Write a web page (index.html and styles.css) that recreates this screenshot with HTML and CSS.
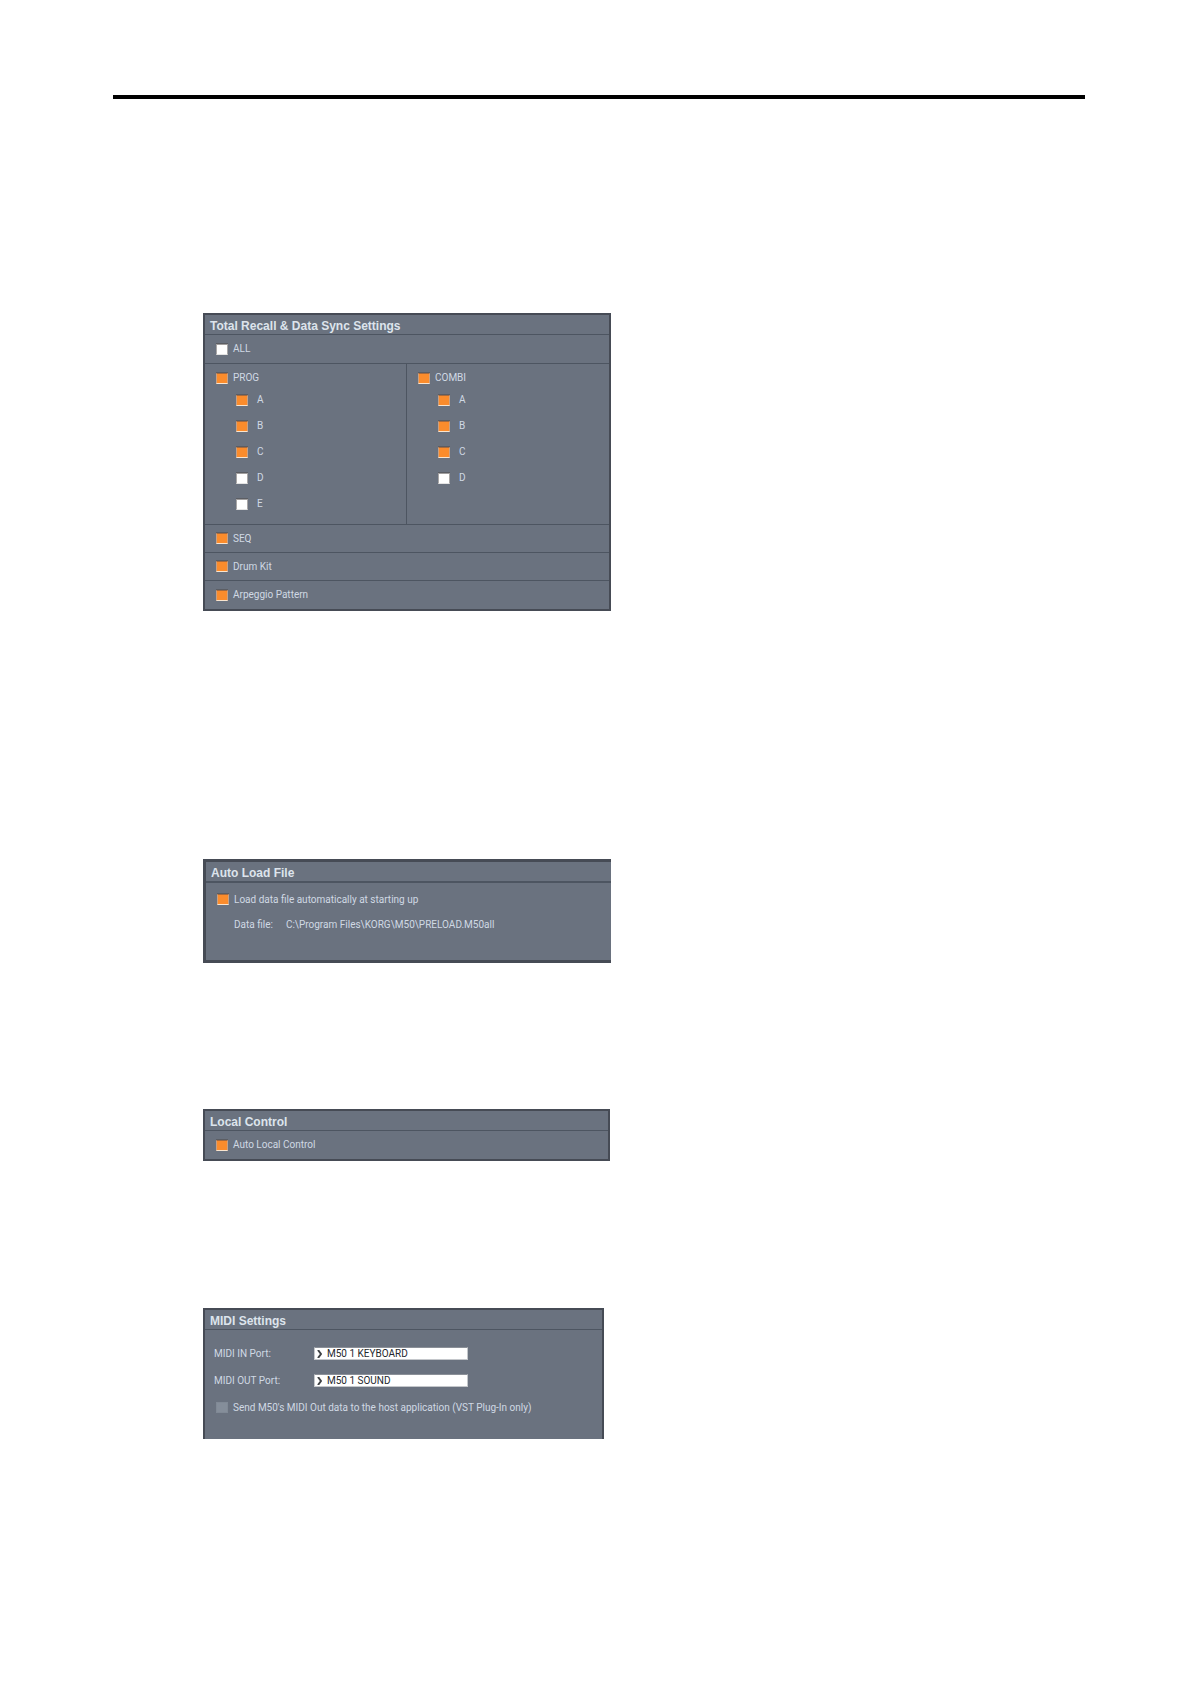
FILE: index.html
```html
<!DOCTYPE html>
<html lang="en">
<head>
<meta charset="utf-8">
<meta name="viewport" content="width=device-width, initial-scale=1">
<title>Settings</title>
<link rel="stylesheet" href="styles.css">
</head>
<body>
<main class="page">
  <hr class="rule">

  <section class="panel sync">
    <h2 class="title">Total Recall &amp; Data Sync Settings</h2>
    <div class="row"><label class="check"><input type="checkbox"><span>ALL</span></label></div>
    <div class="banks">
      <div class="bank">
        <label class="check head"><input type="checkbox" checked><span>PROG</span></label>
        <label class="check sub"><input type="checkbox" checked><span>A</span></label>
        <label class="check sub"><input type="checkbox" checked><span>B</span></label>
        <label class="check sub"><input type="checkbox" checked><span>C</span></label>
        <label class="check sub"><input type="checkbox"><span>D</span></label>
        <label class="check sub"><input type="checkbox"><span>E</span></label>
      </div>
      <div class="bank">
        <label class="check head"><input type="checkbox" checked><span>COMBI</span></label>
        <label class="check sub"><input type="checkbox" checked><span>A</span></label>
        <label class="check sub"><input type="checkbox" checked><span>B</span></label>
        <label class="check sub"><input type="checkbox" checked><span>C</span></label>
        <label class="check sub"><input type="checkbox"><span>D</span></label>
      </div>
    </div>
    <div class="row"><label class="check"><input type="checkbox" checked><span>SEQ</span></label></div>
    <div class="row"><label class="check"><input type="checkbox" checked><span>Drum Kit</span></label></div>
    <div class="row"><label class="check"><input type="checkbox" checked><span>Arpeggio Pattern</span></label></div>
  </section>

  <section class="panel autoload">
    <h2 class="title">Auto Load File</h2>
    <div class="autoload-body">
      <label class="check"><input type="checkbox" checked><span>Load data file automatically at starting up</span></label>
      <div class="file"><span>Data file:</span><span>C:\Program Files\KORG\M50\PRELOAD.M50all</span></div>
    </div>
  </section>

  <section class="panel local">
    <h2 class="title">Local Control</h2>
    <div class="row"><label class="check"><input type="checkbox" checked><span>Auto Local Control</span></label></div>
  </section>

  <section class="panel midi">
    <h2 class="title">MIDI Settings</h2>
    <div class="midi-body">
      <div class="port">
        <label for="midi-in">MIDI IN Port:</label>
        <div class="picker">
          <select id="midi-in"><option>M50 1 KEYBOARD</option></select>
          <svg class="arrow" viewBox="0 0 5 8" aria-hidden="true"><path d="M1 0L4 4L1 8"/></svg>
        </div>
      </div>
      <div class="port">
        <label for="midi-out">MIDI OUT Port:</label>
        <div class="picker">
          <select id="midi-out"><option>M50 1 SOUND</option></select>
          <svg class="arrow" viewBox="0 0 5 8" aria-hidden="true"><path d="M1 0L4 4L1 8"/></svg>
        </div>
      </div>
      <label class="check"><input type="checkbox" disabled><span>Send M50's MIDI Out data to the host application (VST Plug-In only)</span></label>
    </div>
  </section>
</main>
</body>
</html>
```
FILE: styles.css
```css
* { box-sizing: border-box; }

body {
  margin: 0;
  background: #fff;
  font-family: Roboto, "Liberation Sans", sans-serif;
  font-size: 10px;
  line-height: 12px;
  color: #d0d9e4;
}

.page { padding: 95px 105px 96px 113px; }

.rule {
  height: 4px;
  margin: 0;
  border: 0;
  background: #000;
}

.panel {
  width: 100%;
  max-width: 408px;
  margin-left: 90px;
  border: 2px solid #464b55;
  background: #6a727f;
}

.sync { margin-top: 214px; }
.autoload { margin-top: 248px; border-width: 3px; border-right: 0; }
.local { margin-top: 146px; max-width: 407px; }
.midi { margin-top: 147px; max-width: 401px; border-bottom: 0; }

.title {
  margin: 0;
  padding: 3px 5px 0;
  border-bottom: 1px solid #4d5561;
  font: bold 12px/16px "Liberation Sans", Arial, sans-serif;
  color: #dde4ec;
}

.autoload .title { border-bottom-width: 2px; }

.row {
  display: flex;
  align-items: center;
  height: 28px;
  padding-left: 11px;
}

.sync .row + .row, .banks { border-top: 1px solid #4d5561; }
.banks + .row { border-top: 1px solid #4d5561; }
.sync .row:last-child { height: 29px; }

.check {
  display: flex;
  align-items: center;
  gap: 5px;
}

.check input {
  appearance: none;
  flex: none;
  width: 12px;
  height: 11px;
  margin: 0;
  border: 1px solid #a8a6a6;
  border-top-color: #a09e9e;
  border-bottom-color: #e4e4e4;
  background: #fff;
  box-shadow: 0 -1px #5b5d63;
}

.check input:checked {
  border-color: #a86a3c #c9a184 #f8e5d0;
  background: #fb8c2c;
}

.check input:disabled {
  border-color: #808995;
  background: #858e9a;
  box-shadow: none;
}

.banks {
  display: grid;
  grid-template-columns: 201px 1fr;
}

.bank { padding: 5px 0 7px 11px; }
.bank + .bank { border-left: 1px solid #4d5561; }
.head { height: 18px; }
.sub { height: 26px; margin-left: 20px; gap: 9px; }

.autoload-body { padding: 4px 0 23px 11px; }
.autoload-body .check, .file { height: 25px; }

.file {
  display: flex;
  align-items: center;
  gap: 13px;
  padding-left: 17px;
}

.midi-body { padding: 10px 0 18px 9px; }
.midi-body > .check { height: 27px; padding-left: 2px; }

.port {
  display: grid;
  grid-template-columns: 100px 154px;
  align-items: center;
  height: 27px;
}

.picker { display: grid; align-items: center; }
.picker > * { grid-area: 1 / 1; }

.picker select {
  appearance: none;
  width: 100%;
  height: 13px;
  margin: 0;
  padding: 0 0 0 12px;
  border: 1px solid #c4c7cb;
  border-top-color: #8b9098;
  border-radius: 0;
  background: #fff;
  font: 10px/11px Roboto, "Liberation Sans", sans-serif;
  color: #25282d;
}

.arrow {
  width: 5px;
  height: 8px;
  margin-left: 3px;
  fill: none;
  stroke: #3f4245;
  stroke-width: 2;
  pointer-events: none;
}
```
